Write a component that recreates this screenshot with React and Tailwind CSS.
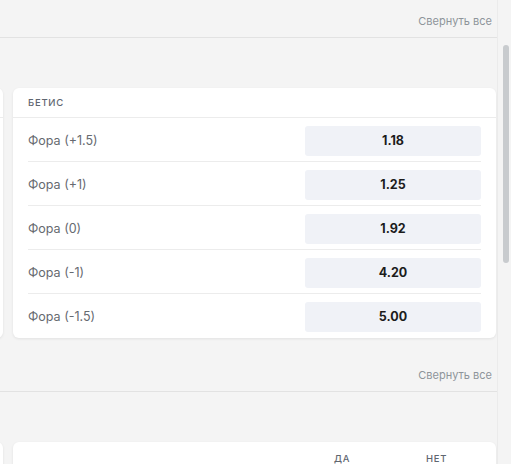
import React from "react";

const rows = [
  ["Фора (+1.5)", "1.18"],
  ["Фора (+1)", "1.25"],
  ["Фора (0)", "1.92"],
  ["Фора (-1)", "4.20"],
  ["Фора (-1.5)", "5.00"],
];

function OddsCard() {
  return (
    <div className="w-[483px] shrink-0 rounded-md bg-white shadow-[0_1px_3px_rgba(0,0,0,0.08)]">
      <div className="h-[30px] flex items-center pt-[2px] pl-[15px] border-b border-[#ececec] text-[9.5px] tracking-[0.08em] text-[#5f6670] font-medium">
        БЕТИС
      </div>
      <div className="px-[15px]">
        {rows.map(([label, odd], i) => (
          <div
            key={label}
            className={`h-[44px] flex items-center justify-between pt-[2px] ${i < rows.length - 1 ? "border-b border-[#ececec]" : ""}`}
          >
            <span className="text-[12.5px] text-[#666a70] pt-[1px]">{label}</span>
            <div className="w-[176px] h-[30px] rounded-[3px] bg-[#f0f2f7] flex items-center justify-center pt-[1px] text-[12.5px] font-bold text-[#1c1c1c]">
              {odd}
            </div>
          </div>
        ))}
      </div>
    </div>
  );
}

function HiddenCard() {
  return (
    <div className="w-[483px] h-[250px] shrink-0 rounded-md bg-white shadow-[0_1px_3px_rgba(0,0,0,0.08)]">
      <div className="h-[30px] border-b border-[#ececec]" />
    </div>
  );
}

function SectionHeader() {
  return (
    <div className="h-[38px] shrink-0 flex items-center justify-end pt-[5px] pr-[5px] border-b border-[#e2e2e2] text-[11px] text-[#8e949a]">
      Свернуть все
    </div>
  );
}

export default function App() {
  return (
    <div
      className="w-[511px] h-[464px] overflow-hidden bg-[#f4f4f4] flex"
      style={{ fontFamily: "Inter, 'Noto Sans', sans-serif" }}
    >
      <div className="w-[497px] shrink-0 flex flex-col overflow-hidden">
        <SectionHeader />
        <div className="h-[50px] shrink-0" />
        <div className="flex shrink-0 gap-[10px] -ml-[480px]">
          <HiddenCard />
          <OddsCard />
        </div>
        <div className="mt-[16px] shrink-0">
          <SectionHeader />
        </div>
        <div className="h-[50px] shrink-0" />
        <div className="flex shrink-0 gap-[10px] -ml-[480px]">
          <div className="w-[483px] h-[40px] shrink-0 rounded-md bg-white shadow-[0_1px_3px_rgba(0,0,0,0.08)]" />
          <div className="w-[483px] h-[40px] shrink-0 rounded-md bg-white shadow-[0_1px_3px_rgba(0,0,0,0.08)] flex items-start pt-[10px] text-[9.5px] tracking-[0.08em] text-[#5f6670] font-medium">
            <span className="ml-[321px] w-[16px] text-center">ДА</span>
            <span className="ml-[76px] w-[20px] text-center">НЕТ</span>
          </div>
        </div>
      </div>
      <div className="flex-1 border-l border-[#ebebeb] bg-[#f4f4f4] pt-[45px] pl-[5px]">
        <div className="w-[6px] h-[218px] rounded-full bg-[#c8cbce]" />
      </div>
    </div>
  );
}
